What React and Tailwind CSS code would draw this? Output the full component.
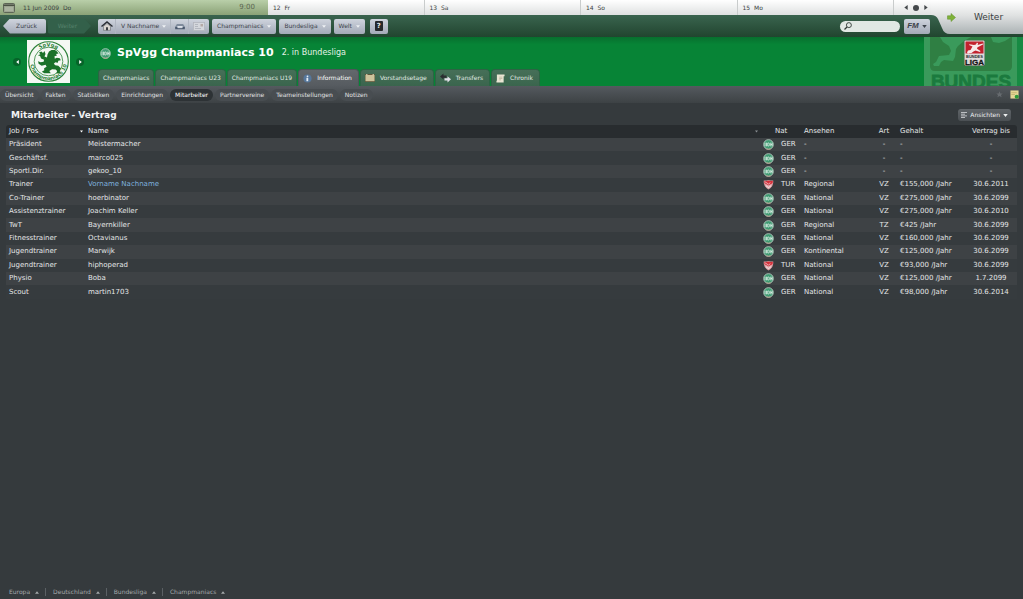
import { useState } from 'react';
import clsx from 'clsx';

const DAYS = ['12  Fr', '13  Sa', '14  So', '15  Mo'];

const TABS = [
  { label: 'Champmaniacs' },
  { label: 'Champmaniacs U23' },
  { label: 'Champmaniacs U19' },
  { label: 'Information', icon: InfoIcon },
  { label: 'Vorstandsetage', icon: BoardIcon },
  { label: 'Transfers', icon: TransferIcon },
  { label: 'Chronik', icon: ScrollIcon },
];

const SUBNAV = [
  'Übersicht', 'Fakten', 'Statistiken', 'Einrichtungen', 'Mitarbeiter',
  'Partnervereine', 'Teameinstellungen', 'Notizen',
];

const STAFF = [
  { job: 'Präsident', name: 'Meistermacher', nat: 'GER', rep: '-', type: '-', wage: '-', until: '-' },
  { job: 'Geschäftsf.', name: 'marco025', nat: 'GER', rep: '-', type: '-', wage: '-', until: '-' },
  { job: 'Sportl.Dir.', name: 'gekoo_10', nat: 'GER', rep: '-', type: '-', wage: '-', until: '-' },
  { job: 'Trainer', name: 'Vorname Nachname', nat: 'TUR', rep: 'Regional', type: 'VZ', wage: '€155,000 /Jahr', until: '30.6.2011', own: true },
  { job: 'Co-Trainer', name: 'hoerbinator', nat: 'GER', rep: 'National', type: 'VZ', wage: '€275,000 /Jahr', until: '30.6.2099' },
  { job: 'Assistenztrainer', name: 'Joachim Keller', nat: 'GER', rep: 'National', type: 'VZ', wage: '€275,000 /Jahr', until: '30.6.2010' },
  { job: 'TwT', name: 'Bayernkiller', nat: 'GER', rep: 'Regional', type: 'TZ', wage: '€425 /Jahr', until: '30.6.2099' },
  { job: 'Fitnesstrainer', name: 'Octavianus', nat: 'GER', rep: 'National', type: 'VZ', wage: '€160,000 /Jahr', until: '30.6.2099' },
  { job: 'Jugendtrainer', name: 'Marwijk', nat: 'GER', rep: 'Kontinental', type: 'VZ', wage: '€125,000 /Jahr', until: '30.6.2099' },
  { job: 'Jugendtrainer', name: 'hiphoperad', nat: 'TUR', rep: 'National', type: 'VZ', wage: '€93,000 /Jahr', until: '30.6.2099' },
  { job: 'Physio', name: 'Boba', nat: 'GER', rep: 'National', type: 'VZ', wage: '€125,000 /Jahr', until: '1.7.2099' },
  { job: 'Scout', name: 'martin1703', nat: 'GER', rep: 'National', type: 'VZ', wage: '€98,000 /Jahr', until: '30.6.2014' },
];

const BREADCRUMB = ['Europa', 'Deutschland', 'Bundesliga', 'Champmaniacs'];

const BTN = 'flex h-[15px] items-center rounded-[2px] bg-linear-to-b from-[#cfd4dd] to-[#a3aab8] text-[#3c424a]';

function Caret({ up, className = 'h-[3px] w-[5px]' }) {
  return (
    <svg viewBox="0 0 6 4" className={clsx('shrink-0', className)} fill="currentColor" aria-hidden="true">
      <path d={up ? 'M0 4h6L3 0z' : 'M0 0h6L3 4z'} />
    </svg>
  );
}

function InfoIcon() {
  return (
    <svg viewBox="0 0 10 10" className="size-[9px]" aria-hidden="true">
      <circle cx="5" cy="5" r="4.5" fill="#56779b" />
      <circle cx="5" cy="2.600" r="1" fill="#e6edf5" />
      <path d="M3.800 4.200h2v3.800h-2z" fill="#e6edf5" />
    </svg>
  );
}

function BoardIcon() {
  return (
    <svg viewBox="0 0 10 8" className="h-[8px] w-[10px]" aria-hidden="true">
      <rect width="10" height="8" rx=".5" fill="#5f563a" />
      <rect x=".5" y="1" width="9" height="6.200" fill="#cdc39c" />
      <path d="M1 .2h1.500v.8H1zM7.500.2H9V1H7.500z" fill="#e4dcbc" />
    </svg>
  );
}

function TransferIcon() {
  return (
    <svg viewBox="0 0 11 10" className="h-[10px] w-[11px]" aria-hidden="true">
      <path d="M0 3.500 3.500.5v2h3v2.200h-3v1.800z" fill="#2a2d30" />
      <path d="M11 6.300 7.500 3.300v2h-3v2.200h3v2z" fill="#e1dfe8" />
    </svg>
  );
}

function ScrollIcon() {
  return (
    <svg viewBox="0 0 10 10" className="size-[9px]" aria-hidden="true">
      <path d="M1 .5h8.500v2h-1v7H.5v-2H1z" fill="#e9e5d3" />
      <path d="M3.500 3.500h3.500M3.500 5h3.500M3.500 6.500h2" stroke="#a8a28a" strokeWidth=".6" />
    </svg>
  );
}

function GerBadge() {
  return (
    <svg viewBox="0 0 12 12" className="size-[11px] shrink-0" aria-hidden="true">
      <circle cx="6" cy="6" r="5.300" fill="#3f9a72" stroke="#b9cdc2" strokeWidth=".9" />
      <path d="M2.200 4v4M3.900 4v4M5.200 4.400h1q1 .2 1 1.600t-1 1.600h-1zM8.500 4v4M10 4v4M8.500 6H10" fill="none" stroke="#e2efe8" strokeWidth=".9" />
      <path d="M3.500 10.700q2.500 1 5 0" fill="none" stroke="#d0a08a" strokeWidth=".8" />
    </svg>
  );
}

function TurBadge() {
  return (
    <svg viewBox="0 0 12 12" className="size-[11px] shrink-0" aria-hidden="true">
      <path d="M.8 1.500Q3.500 1.800 6 1q2.500.8 5.200.5.700 6-5.200 10Q.1 7.500.8 1.500z" fill="#dfa3a7" />
      <path d="M1.300 2Q4 2.300 6 1.500q2 .8 4.700.5.100 1.300-.3 2.600L6 6.800 1.700 4.500Q1.300 3.300 1.300 2z" fill="#d4303b" />
      <path d="M1.800 2.800 6 5.500l2-1.500" fill="none" stroke="#f0dcdd" strokeWidth=".8" />
      <path d="M3.200 7.200 6 9.400l2.800-2.200" fill="none" stroke="#efd9da" strokeWidth="1.200" />
    </svg>
  );
}

function Crest() {
  return (
    <svg viewBox="0 0 43 43" className="size-[43px]" role="img" aria-label="SpVgg Champmaniacs 10">
      <rect width="43" height="43" fill="#f4f8f3" />
      <g fill="none" stroke="#2c8139">
        <circle cx="21.500" cy="21.500" r="19.800" strokeWidth="1.100" />
        <circle cx="21.500" cy="21.500" r="14.300" strokeWidth=".8" />
      </g>
      <path
        d="M12 12.500l2.500-1 1.500 1.500 1.500-2 1 3-1 2.500 2.500 1 .5-3 1.500-3 2.500-1.500 3.500 0 2 1.500 1.500 2-2.500.5 1 1.500-2.500.8.3 2.400 2-1 3 .5 1 2-2.500.5-.5 2-2.500-.5-1.500 1.500 1.500 1.500 3 .5 2.500 2.500-1 3.500 1 1.500-4.500.2.800-2.500-1.500-1.500-3.500-.2-2.800 1.700 1.500 2.300h-6.500l-2.500-1.500 2.500-1.500-.2-2 2.500-1.500-1-2-4 1-3-2-.5-2.500 2.500 1 3-.5.500-2-3-1.200-1-2.500-2.200-.7 2.500-1z"
        fill="#1b7129"
      />
      <path id="crest-top" d="M6.500 21.500a15 15 0 0 1 30 0" fill="none" />
      <path id="crest-bottom" d="M3 21.500a18.500 18.500 0 0 0 37 0" fill="none" />
      <g fill="#2c8139" fontFamily="DejaVu Sans" fontWeight="bold" fontSize="5" textAnchor="middle">
        <text><textPath href="#crest-top" startOffset="50%">SpVgg</textPath></text>
        <text><textPath href="#crest-bottom" startOffset="50%">Champmaniacs 10</textPath></text>
      </g>
    </svg>
  );
}

function LeagueBanner() {
  return (
    <svg viewBox="0 0 100 49" className="h-[49px] w-[100px] shrink-0" role="img" aria-label="Bundesliga">
      <rect x="1" width="93" height="49" fill="#3a9a5b" />
      <rect x="94" width="6" height="49" fill="#178a43" />
      <path d="M7 0h82v29q0 5-5 5H12q-5 0-5-5z" fill="#2f7f43" />
      <path d="M17 0h31l-7 4-6 5-2 3-1 8-2 4-9-1-3 2-2 4h-5l-1-2 3-2 3-6 10-1 2-4-2-5-6-4zM68 0h20l-6 4-6 2-6-1z" fill="#3a9a5b" />
      <text x="48" y="51" textAnchor="middle" fontFamily="Liberation Sans" fontWeight="bold" fontSize="19" fill="#1b7a3e" stroke="#1b7a3e" strokeWidth=".8">BUNDES</text>
      <rect x="41" y="3" width="21" height="26" rx="1.500" fill="#4b3a38" opacity=".5" />
      <rect x="41.500" y="3.500" width="20" height="25" rx="1" fill="#dedada" />
      <rect x="42.500" y="4.500" width="18" height="12" rx=".5" fill="#c3222e" />
      <path d="M44 15.500l1-2 2.500-.5 2-3.500-3.500-1.500.5-.8 4.500.8 2-.5.800-1.700 1.200.3-.3 2 5-1.500.3.900-5.500 2.800-.5 1.500 3.500 2.200-.5 1-4.500-1.500-2 1-2 1.500-2.500.2-1 .8z" fill="#f6eaea" />
      <text x="51.500" y="21" textAnchor="middle" fontFamily="Liberation Sans" fontWeight="bold" fontSize="4" fill="#2b2b2b">BUNDES</text>
      <text x="51.500" y="27.500" textAnchor="middle" fontFamily="Liberation Sans" fontWeight="bold" fontSize="8" fill="#151515" stroke="#151515" strokeWidth=".3">LIGA</text>
    </svg>
  );
}

function DateBar() {
  return (
    <div className="flex h-[15px] bg-linear-to-b from-white to-[#dfe1e1] text-[6px] text-[#3b3f42]">
      <div className="flex w-[268px] shrink-0 items-center bg-linear-to-b from-[#b9cfa9] to-[#8ba277] pr-[13px] pl-[3px]">
        <svg viewBox="0 0 12 10" className="h-[10px] w-[12px]" aria-hidden="true">
          <rect x=".5" y=".5" width="11" height="9" rx="1" fill="#9aa38f" stroke="#5d6656" />
          <path d="M.5 1.500h11v1.500H.5z" fill="#4a5144" />
          <path d="M2 5h8M2 7h8" stroke="#c3ccb9" strokeWidth=".8" />
        </svg>
        <span className="ml-2 whitespace-pre">11 Jun 2009  Do</span>
        <span className="ml-auto text-[7px] text-[#5a6650]">9:00</span>
      </div>
      {DAYS.map((d) => (
        <div key={d} className="flex flex-1 items-center border-r border-[#c9cccc] pl-[5px] whitespace-pre">{d}</div>
      ))}
      <div className="flex w-[129px] shrink-0 items-center gap-[5px] pl-[10px]">
        <button aria-label="Vorheriger Tag"><svg viewBox="0 0 4 6" className="h-[5px] w-[4px]"><path d="M4 0v6L0 3z" fill="#44484b" /></svg></button>
        <button aria-label="Heute" className="size-[6px] rounded-full bg-[#44484b]" />
        <button aria-label="Nächster Tag"><svg viewBox="0 0 4 6" className="h-[5px] w-[4px]"><path d="M0 0v6l4-3z" fill="#44484b" /></svg></button>
      </div>
    </div>
  );
}

function Toolbar() {
  return (
    <div className="flex h-[22px] items-center bg-linear-to-b from-[#3a644f] to-[#21452f] pr-[93px] pl-[3px] text-[6px]">
      <button className={clsx(BTN, 'w-[43px] justify-center pl-1 [clip-path:polygon(16%_0,100%_0,100%_100%,16%_100%,0_50%)]')}>Zurück</button>
      <button disabled className="ml-[2px] flex h-[15px] w-[43px] items-center justify-center rounded-[2px] bg-[#33604a] pr-1 text-[#55806a] [clip-path:polygon(0_0,84%_0,100%_50%,84%_100%,0_100%)]">Weiter</button>

      <div className={clsx(BTN, 'ml-[7px] divide-x divide-[#b0b6c1]')}>
        <button aria-label="Startseite" className="flex h-full w-[18px] items-center justify-center">
          <svg viewBox="0 0 12 10" className="h-[10px] w-[12px]">
            <path d="M.5 5.500 6 1l5.500 4.500" fill="none" stroke="#2a2d33" strokeWidth="1.500" />
            <path d="M2.500 5.300 6 2.500l3.500 2.800v4h-7z" fill="#d9d5d0" stroke="#55585e" strokeWidth=".5" />
            <path d="M5 6.300h2v3H5z" fill="#3a3d42" />
          </svg>
        </button>
        <button aria-haspopup="menu" className="flex h-full w-[55px] items-center justify-between pr-1 pl-[5px]">
          V Nachname
          <Caret className="h-[3px] w-[4px] text-[#eef0f3]" />
        </button>
        <button aria-label="Stadion" className="flex h-full w-[18px] items-center justify-center">
          <svg viewBox="0 0 11 8" className="h-[7px] w-[10px]">
            <path d="M2 1h7l2 3v2H0V4z" fill="#7f8b9c" />
            <path d="M2.500 3.500h6v2h-6z" fill="#e3e7ee" />
            <path d="M0 4.500h2l1 1.500h5l1-1.500h2V7H0z" fill="#4b596e" />
          </svg>
        </button>
        <button aria-label="Nachrichten" className="flex h-full w-[20px] items-center justify-center">
          <svg viewBox="0 0 12 9" className="h-[9px] w-[12px]">
            <rect x=".4" y=".4" width="11.200" height="8.200" fill="#d4d7dc" stroke="#b3b6bd" strokeWidth=".8" />
            <path d="M2 2.500h3M2 4.500h3M2 6.500h6" stroke="#a5a9b1" strokeWidth=".7" />
            <path d="M7.500 2h2.500v2.500H7.500z" fill="#b4a9a6" />
          </svg>
        </button>
      </div>

      {['Champmaniacs', 'Bundesliga', 'Welt'].map((m) => (
        <button key={m} aria-haspopup="menu" className={clsx(BTN, 'ml-[3px] gap-[4px] pr-[5px] pl-[5px]')}>
          {m}
          <Caret className="h-[3px] w-[4px] text-[#eef0f3]" />
        </button>
      ))}
      <button aria-label="Hilfe" className={clsx(BTN, 'ml-[5px] w-[18px] justify-center')}>
        <span className="flex h-[10px] w-[8px] items-center justify-center rounded-[1px] bg-[#26292c] text-[7px] font-bold text-[#e8e8e8]">?</span>
      </button>

      <div className="ml-auto flex h-[11px] w-[60px] items-center rounded-full bg-[#e1e8e4] pl-[4px]">
        <svg viewBox="0 0 9 9" className="size-[8px] shrink-0" fill="none" stroke="#2f3a35" aria-hidden="true">
          <circle cx="5.500" cy="3.500" r="2.800" strokeWidth="1" />
          <path d="M3.400 5.600.6 8.400" strokeWidth="1.400" />
        </svg>
        <input type="text" aria-label="Suche" className="h-full w-full min-w-0 bg-transparent px-1 text-[#26332c] outline-none" />
      </div>
      <button aria-haspopup="menu" className={clsx(BTN, 'ml-[4px] w-[26px] justify-center gap-[3px] text-[#1f2226]')}>
        <span className="font-['Liberation_Sans',sans-serif] text-[8px] font-bold italic">FM</span>
        <Caret />
      </button>
    </div>
  );
}

function ContinueButton() {
  return (
    <button className="absolute top-0 right-0 h-[34px] w-[92px] text-[9px] text-[#3b3f42]">
      <svg viewBox="0 0 92 34" className="absolute inset-0 size-full" aria-hidden="true">
        <defs>
          <linearGradient id="continue-bg" x1="0" y1="0" x2="0" y2="1">
            <stop offset="0" stopColor="#ffffff" />
            <stop offset=".45" stopColor="#e0e2e2" />
            <stop offset="1" stopColor="#abb2b4" />
          </linearGradient>
        </defs>
        <path d="M0 0v15q5 0 7 4l4 9q2 6 8 6h73V0z" fill="url(#continue-bg)" />
        <path d="M16.500 15.800h3.500v-2.300l4.500 4-4.500 4v-2.300h-3.500z" fill="#7fb239" stroke="#5f8f2a" strokeWidth=".5" />
      </svg>
      <span className="relative ml-[23px]">Weiter</span>
    </button>
  );
}

function ClubArrow({ label, d }) {
  return (
    <button aria-label={label} className="flex size-[8px] items-center justify-center rounded-full bg-[#066429]">
      <svg viewBox="0 0 4 6" className="h-[4px] w-[3px]"><path d={d} fill="#fff" /></svg>
    </button>
  );
}

function ClubHeader({ tab, onTab }) {
  return (
    <header className="flex h-[49px] overflow-hidden bg-[#078436] bg-linear-to-b from-[#076f2e] to-[#078436] to-15%">
      <div className="flex w-[98px] shrink-0 items-center gap-[6px] pl-[13px]">
        <ClubArrow label="Vorheriger Verein" d="M4 0v6L0 3z" />
        <Crest />
        <ClubArrow label="Nächster Verein" d="M0 0v6l4-3z" />
      </div>
      <div className="flex flex-1 flex-col justify-between">
        <div className="flex items-center pt-[9px] pl-[2px] text-white">
          <GerBadge />
          <h1 className="ml-[6px] text-[11px] leading-[14px] font-bold">SpVgg Champmaniacs 10</h1>
          <span className="ml-[8px] text-[8px] text-[#e3f2e7]">2. in Bundesliga</span>
        </div>
        <nav className="flex gap-[1px] text-[6px]">
          {TABS.map(({ label, icon: Icon }) => (
            <button
              key={label}
              onClick={() => onTab(label)}
              className={clsx(
                'flex h-[17px] items-center gap-[5px] rounded-t-[4px] border-x border-t pl-[4px]',
                Icon ? 'pr-[6px]' : 'pr-[4px]',
                tab === label
                  ? 'border-[#4d5559] bg-linear-to-b from-[#63686c] to-[#565b60] text-white'
                  : 'border-[#2c6444] bg-linear-to-b from-[#466f58] to-[#3a654d] text-[#e2ebe5]',
              )}
            >
              {Icon && <Icon />}
              {label}
            </button>
          ))}
        </nav>
      </div>
      <LeagueBanner />
    </header>
  );
}

function SubNav({ page, onPage }) {
  return (
    <nav className="flex h-[17px] items-center gap-[2px] bg-linear-to-b from-[#555a5f] to-[#3d4245] pr-[4px] text-[6px] text-[#e0e2e3]">
      {SUBNAV.map((p) => (
        <button
          key={p}
          onClick={() => onPage(p)}
          className={clsx('h-[12px] rounded-full px-[5px]', page === p ? 'bg-[#2d3235] text-white' : 'bg-[#484d51]')}
        >
          {p}
        </button>
      ))}
      <button aria-label="Favorit" className="ml-auto">
        <svg viewBox="0 0 10 10" className="size-[7px]"><path d="M5 .5l1.400 3h3.200L7.100 5.600l.9 3.400-3-1.900L2 9l.9-3.400L.4 3.500h3.200z" fill="#666b6f" /></svg>
      </button>
      <button aria-label="Notiz hinzufügen" className="ml-[5px]">
        <svg viewBox="0 0 10 10" className="size-[9px]">
          <path d="M.5.500h9v9h-9z" fill="#e6d796" />
          <path d="M1.500 3h6M1.500 5h4" stroke="#b8a763" strokeWidth=".7" />
          <circle cx="7.500" cy="7.500" r="2.300" fill="#2f9a3a" />
        </svg>
      </button>
    </nav>
  );
}

function StaffTable() {
  return (
    <table className="h-[174px] w-full table-fixed border-separate border-spacing-0 text-left text-[7px] leading-[9px] text-[#e4e6e7]">
      <thead>
        <tr className="h-[13px] [&>th]:bg-[#282c2f] [&>th]:p-0 [&>th]:font-normal">
          <th className="w-[79px] rounded-tl-[3px]">
            <span className="flex items-center justify-between pr-[2px] pl-[3px]">Job / Pos<Caret className="h-[3px] w-[3px] text-white" /></span>
          </th>
          <th>
            <span className="flex items-center justify-between pr-[2px] pl-[3px]">Name<Caret className="h-[3px] w-[3px] text-[#8a8f93]" /></span>
          </th>
          <th className="w-[41px]"><span className="pl-[15px]">Nat</span></th>
          <th className="w-[71px]"><span className="pl-[3px]">Ansehen</span></th>
          <th className="w-[24px] text-center">Art</th>
          <th className="w-[69px]"><span className="pl-[4px]">Gehalt</span></th>
          <th className="w-[52px] rounded-tr-[3px] text-center whitespace-nowrap">Vertrag bis</th>
        </tr>
      </thead>
      <tbody>
        {STAFF.map((s) => (
          <tr key={s.name} className="h-[13px] odd:bg-[#3e4245] even:bg-[#363b3e]">
            <td className="p-0 pl-[3px]">{s.job}</td>
            <td className={clsx('p-0 pl-[3px]', s.own && 'text-[#7fb2de]')}>{s.name}</td>
            <td className="p-0 pl-[3px]">
              <span className="flex items-center gap-[7px]">{s.nat === 'GER' ? <GerBadge /> : <TurBadge />}{s.nat}</span>
            </td>
            <td className="p-0 pl-[3px]">{s.rep}</td>
            <td className="p-0 text-center">{s.type}</td>
            <td className="p-0 pl-[4px] whitespace-nowrap">{s.wage}</td>
            <td className="p-0 text-center">{s.until}</td>
          </tr>
        ))}
      </tbody>
    </table>
  );
}

export default function App() {
  const [tab, setTab] = useState('Information');
  const [page, setPage] = useState('Mitarbeiter');

  return (
    <div className="flex min-h-screen flex-col bg-[#353a3d] font-['DejaVu_Sans',sans-serif] leading-none">
      <div className="relative">
        <DateBar />
        <Toolbar />
        <ContinueButton />
      </div>
      <ClubHeader tab={tab} onTab={setTab} />
      <SubNav page={page} onPage={setPage} />

      <main className="px-[6px]">
        <div className="flex h-[22px] items-center justify-between pt-[2px] pr-[6px] pl-[5px]">
          <h2 className="text-[9px] font-bold text-[#f0f1f2]">Mitarbeiter - Vertrag</h2>
          <button aria-haspopup="menu" className="flex h-[12px] items-center gap-[3px] rounded-[3px] bg-linear-to-b from-[#5f6468] to-[#4b5054] px-[3px] text-[6px] text-[#eceeef]">
            <svg viewBox="0 0 6 6" className="size-[6px]" stroke="#d5d8da" aria-hidden="true"><path d="M0 .5h6M0 2.200h4M0 3.900h6M0 5.500h4" strokeWidth=".8" /></svg>
            Ansichten
            <Caret />
          </button>
        </div>
        <StaffTable />
      </main>

      <footer className="mt-auto flex h-[14px] items-center divide-x divide-[#5b6064] pl-[2px] text-[6px] text-[#a4a8aa]">
        {BREADCRUMB.map((b) => (
          <button key={b} aria-haspopup="menu" className="flex h-[8px] items-center gap-[5px] pr-[6px] pl-[7px]">
            {b}
            <Caret up className="h-[3px] w-[4px]" />
          </button>
        ))}
      </footer>
    </div>
  );
}
